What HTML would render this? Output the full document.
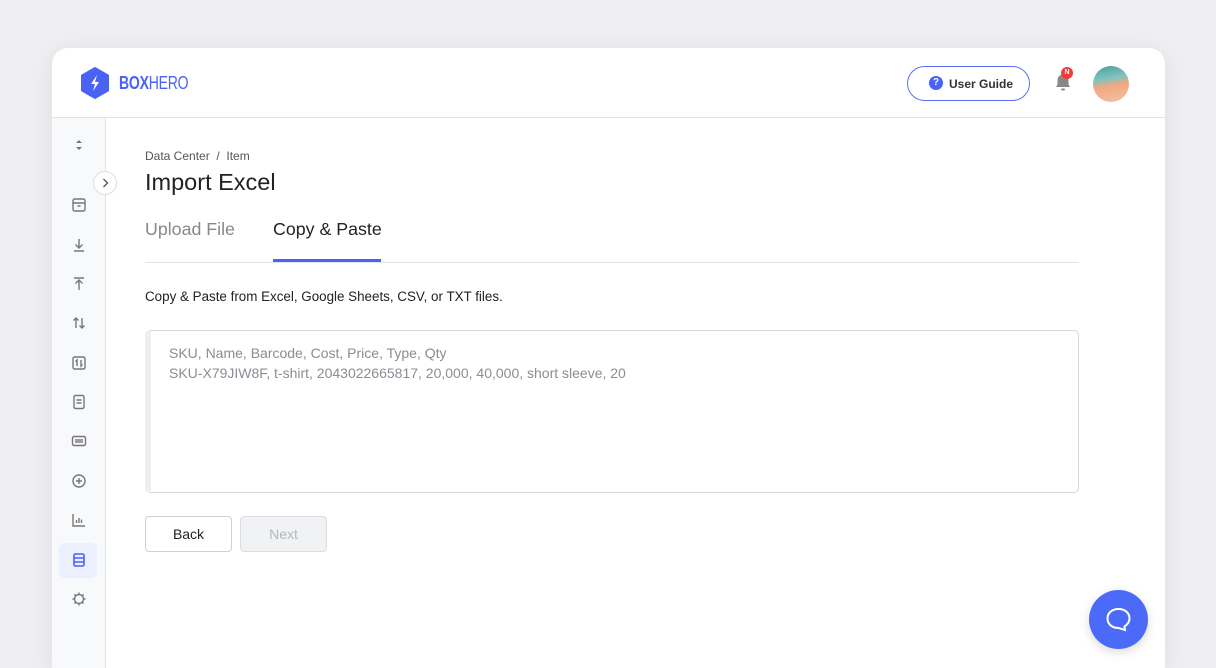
<!DOCTYPE html>
<html><head><meta charset="utf-8"><style>
*{box-sizing:border-box;margin:0;padding:0}
body{width:1216px;height:654px;background:#efeff1;font-family:"Liberation Sans",sans-serif;position:relative;overflow:hidden;color:#222}
.win{position:absolute;left:52px;top:48px;width:1113px;height:620px;background:#fff;border-radius:16px 16px 0 0;box-shadow:0 4px 24px rgba(0,0,0,.08);overflow:hidden}
.hdr{position:absolute;left:0;top:0;right:0;height:70px;border-bottom:1px solid #e2e3e6}
.side{position:absolute;left:0;top:70px;width:54px;bottom:0;background:#f8f9fb;border-right:1px solid #e2e3e6}
.ic{position:absolute;left:18px;width:18px;height:18px}
.abs{position:absolute}
</style></head><body>
<div class="win">
 <div class="hdr">
  <svg class="abs" style="left:28px;top:19px" width="30" height="32" viewBox="0 0 30 32"><path d="M15 1 L28 8.5 V23.5 L15 31 L2 23.5 V8.5 Z" fill="#4a62f5" stroke="#4a62f5" stroke-width="2" stroke-linejoin="round"/><path d="M17 8 L11 17 H15 L13 24 L19 15 H15 Z" fill="#fff"/></svg>
  <div class="abs" style="left:67px;top:25px;font-size:18px;color:#4a62f5;letter-spacing:-.3px;transform:scaleX(.78);transform-origin:left"><b>BOX</b>HERO</div>
  <div class="abs" style="left:855px;top:18px;width:123px;height:35px;border:1.5px solid #5b70f5;border-radius:18px;font-size:12px;font-weight:bold;color:#333">
   <span class="abs" style="left:21px;top:9px;width:14px;height:14px;border-radius:7px;background:#4a62f5;color:#fff;font-size:10px;text-align:center;line-height:14px">?</span>
   <span class="abs" style="left:41px;top:10px">User Guide</span></div>
  <svg class="abs" style="left:1001px;top:23px" width="20" height="22" viewBox="0 0 20 22"><path d="M3 16 H17 L15.5 13.5 V9 A5.5 5.5 0 0 0 4.5 9 V13.5 Z" fill="#888"/><rect x="8" y="17.5" width="4" height="2" rx="1" fill="#888"/></svg>
  <div class="abs" style="left:1009px;top:19px;width:12px;height:12px;border-radius:6px;background:#f03b3b;color:#fff;font-size:7px;font-weight:bold;text-align:center;line-height:12px">N</div>
  <div class="abs" style="left:1041px;top:18px;width:36px;height:36px;border-radius:18px;background:linear-gradient(170deg,#4e9c9a 0%,#7cc4c0 35%,#f3a880 55%,#f0c0a8 100%)"></div>
 </div>
 <div class="side">
  <svg class="ic" style="top:18px" viewBox="0 0 18 18"><path d="M6 7 L9 4 L12 7 Z M6 11 L9 14 L12 11 Z" fill="#777"/></svg>
  <svg class="ic" style="top:78px" viewBox="0 0 18 18" fill="none" stroke="#777" stroke-width="1.4"><rect x="3" y="3" width="12" height="12" rx="1.5"/><path d="M3 7H15M7.5 10H10.5"/></svg>
  <svg class="ic" style="top:118px" viewBox="0 0 18 18" fill="none" stroke="#777" stroke-width="1.4"><path d="M9 3V12M5.5 8.5L9 12L12.5 8.5M4 15H14"/></svg>
  <svg class="ic" style="top:157px" viewBox="0 0 18 18" fill="none" stroke="#777" stroke-width="1.4"><path d="M9 15V5M5.5 8.5L9 5L12.5 8.5M4 3H14"/></svg>
  <svg class="ic" style="top:196px" viewBox="0 0 18 18" fill="none" stroke="#777" stroke-width="1.4"><path d="M6 14V4M3.5 6.5L6 4L8.5 6.5M12 4V14M9.5 11.5L12 14L14.5 11.5"/></svg>
  <svg class="ic" style="top:236px" viewBox="0 0 18 18" fill="none" stroke="#777" stroke-width="1.4"><rect x="3" y="3" width="12" height="12" rx="1.5"/><path d="M7 12V6L5.5 7.5M11 6V12L12.5 10.5"/></svg>
  <svg class="ic" style="top:275px" viewBox="0 0 18 18" fill="none" stroke="#777" stroke-width="1.4"><rect x="4" y="2.5" width="10" height="13" rx="1.5"/><path d="M6.5 7H11.5M6.5 10H11.5"/></svg>
  <svg class="ic" style="top:314px" viewBox="0 0 18 18" fill="none" stroke="#777" stroke-width="1.4"><rect x="2.5" y="4.5" width="13" height="9" rx="1.5"/><path d="M6 7V11M8 7V11M10 7V11M12 7V11"/></svg>
  <svg class="ic" style="top:354px" viewBox="0 0 18 18" fill="none" stroke="#777" stroke-width="1.4"><circle cx="9" cy="9" r="6"/><path d="M9 6V12M6 9H12"/></svg>
  <svg class="ic" style="top:393px" viewBox="0 0 18 18" fill="none" stroke="#777" stroke-width="1.4"><path d="M3 3V15H15M6.5 12V9M9 12V7M11.5 12V8.5"/></svg>
  <div class="abs" style="left:7px;top:425px;width:38px;height:35px;border-radius:6px;background:#eceffe"></div>
  <svg class="ic" style="top:433px" viewBox="0 0 18 18" fill="none" stroke="#4a62f5" stroke-width="1.6"><rect x="4" y="3" width="10" height="12" rx="1.5"/><path d="M4 7H14M4 11H14"/></svg>
  <svg class="ic" style="top:472px" viewBox="0 0 18 18" fill="none" stroke="#777" stroke-width="1.4"><circle cx="9" cy="9" r="4.5"/><path d="M9 2.5V4.5M9 13.5V15.5M2.5 9H4.5M13.5 9H15.5M4.4 4.4L5.8 5.8M12.2 12.2L13.6 13.6M4.4 13.6L5.8 12.2M12.2 5.8L13.6 4.4"/></svg>
 </div>
 <div class="abs" style="left:41px;top:123px;width:24px;height:24px;border-radius:12px;background:#fff;border:1px solid #ddd"><svg width="22" height="22" viewBox="0 0 22 22"><path d="M9.5 7L13.5 11L9.5 15" fill="none" stroke="#555" stroke-width="1.3"/></svg></div>
 <div class="abs" style="left:93px;top:101px;font-size:12px;color:#555">Data Center&nbsp; / &nbsp;Item</div>
 <div class="abs" style="left:93px;top:121px;font-size:23.5px;color:#222">Import Excel</div>
 <div class="abs" style="left:93px;top:171px;font-size:17.8px;color:#888">Upload File</div>
 <div class="abs" style="left:221px;top:171px;font-size:17.8px;color:#222">Copy &amp; Paste</div>
 <div class="abs" style="left:93px;top:214px;width:934px;height:1px;background:#e2e3e6"></div>
 <div class="abs" style="left:221px;top:211px;width:108px;height:3px;background:#4a62f5"></div>
 <div class="abs" style="left:93px;top:241px;font-size:13.4px;color:#222">Copy &amp; Paste from Excel, Google Sheets, CSV, or TXT files.</div>
 <div class="abs" style="left:93px;top:282px;width:934px;height:163px;border:1px solid #d6d7db;border-left:6px solid #eceef0;border-radius:5px;font-size:14px;color:#8a8d94;line-height:20px;padding:12px 0 0 18px">SKU, Name, Barcode, Cost, Price, Type, Qty<br>SKU-X79JIW8F, t-shirt, 2043022665817, 20,000, 40,000, short sleeve, 20</div>
 <div class="abs" style="left:93px;top:468px;width:87px;height:36px;border:1px solid #cfd0d4;border-radius:4px;font-size:14px;text-align:center;line-height:34px;color:#222">Back</div>
 <div class="abs" style="left:188px;top:468px;width:87px;height:36px;border:1px solid #dcdde0;background:#f1f2f4;border-radius:4px;font-size:14px;text-align:center;line-height:34px;color:#b5b7bc">Next</div>
</div>
<div class="abs" style="left:1089px;top:590px;width:59px;height:59px;border-radius:30px;background:#4c6af8;box-shadow:0 3px 10px rgba(0,0,0,.15)"><svg width="59" height="59" viewBox="0 0 59 59"><path d="M29.5 19C23 19 18.5 23 18.5 28.5S23 38 29.5 38L36 40L35.5 36.5C38.5 34.5 40.5 31.8 40.5 28.5C40.5 23 36 19 29.5 19Z" fill="none" stroke="#fff" stroke-width="2"/></svg></div>
</body></html>
